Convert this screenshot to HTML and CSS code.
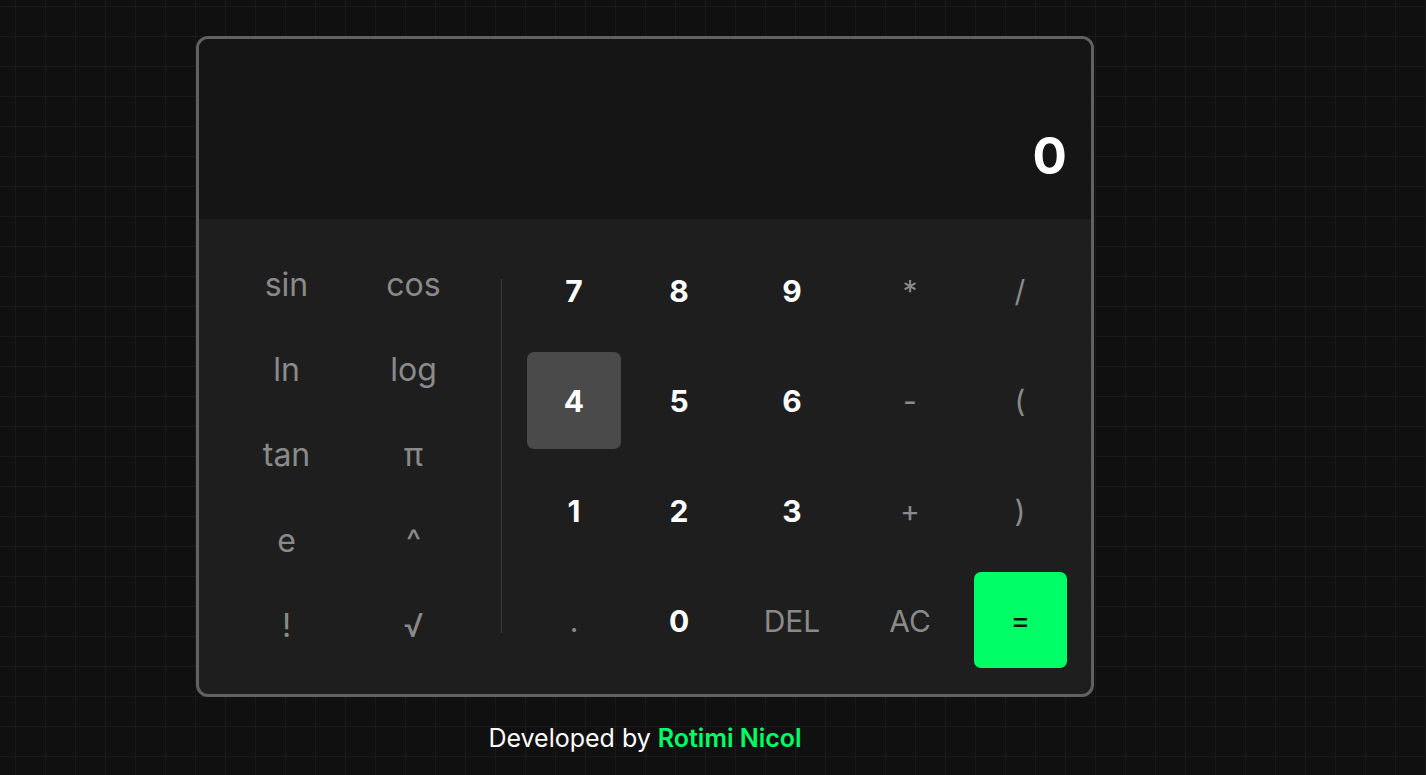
FILE: index.html
```html
<!DOCTYPE html>
<html lang="en">
<head>
<meta charset="utf-8">
<title>Calculator</title>
<link rel="stylesheet" href="styles.css">
</head>
<body>
<div class="wrap">
  <div class="calc">
    <div class="display"><span class="value">0</span></div>
    <div class="keypad">
      <div class="sci">
        <button class="k sc">sin</button>
        <button class="k sc">cos</button>
        <button class="k sc">ln</button>
        <button class="k sc">log</button>
        <button class="k sc">tan</button>
        <button class="k sc">π</button>
        <button class="k sc">e</button>
        <button class="k sc">^</button>
        <button class="k sc">!</button>
        <button class="k sc">√</button>
      </div>
      <div class="divider"></div>
      <div class="main">
        <button class="k num">7</button>
        <button class="k num">8</button>
        <button class="k num">9</button>
        <button class="k op">*</button>
        <button class="k op">/</button>
        <button class="k num active">4</button>
        <button class="k num">5</button>
        <button class="k num">6</button>
        <button class="k op">-</button>
        <button class="k op">(</button>
        <button class="k num">1</button>
        <button class="k num">2</button>
        <button class="k num">3</button>
        <button class="k op">+</button>
        <button class="k op">)</button>
        <button class="k op">.</button>
        <button class="k num">0</button>
        <button class="k op">DEL</button>
        <button class="k op">AC</button>
        <button class="k eq">=</button>
      </div>
    </div>
  </div>
  <p class="footer">Developed by <span class="name">Rotimi Nicol</span></p>
</div>
</body>
</html>
```

FILE: styles.css
```css
* { box-sizing: border-box; }
html, body { height: 100%; }
body {
  margin: 0;
  background-color: #101010;
  background-image:
    linear-gradient(to right, #1a1a1a 1px, transparent 1px),
    linear-gradient(to bottom, #1a1a1a 1px, transparent 1px);
  background-size: 30px 30px;
  background-position: 15px 6px;
  font-family: Inter, "Noto Sans", sans-serif;
  overflow: hidden;
}
.wrap {
  width: 898px;
  margin-left: 196px;
  padding-top: 36px;
}
.calc {
  width: 898px;
  border: 3px solid #616161;
  border-radius: 12px;
  overflow: hidden;
  background: #1e1e1e;
}
.display {
  height: 180px;
  background: #151515;
  display: flex;
  justify-content: flex-end;
  align-items: flex-end;
  padding: 0 24px 38px;
}
.value {
  color: #fff;
  font-weight: 700;
  font-size: 51px;
  line-height: 1;
}
.keypad {
  display: flex;
  padding: 23px 24px 25px;
}
.sci {
  width: 254px;
  display: grid;
  grid-template-columns: 127px 127px;
  grid-template-rows: repeat(5, 1fr);
  height: 427px;
}
.divider {
  width: 1px;
  background: #3a3a3a;
  margin: 37px 25px 36px 24px;
}
.main {
  display: grid;
  grid-template-columns: 94px 116px 110px 126px 94px;
  grid-template-rows: repeat(4, 97px);
  row-gap: 13px;
  width: 540px;
}
.k {
  border: 0;
  background: transparent;
  font-family: inherit;
  padding: 0;
  margin: 0;
  display: flex;
  align-items: center;
  justify-content: center;
  border-radius: 7px;
  line-height: 1;
}
.sc {
  color: #8a8a8a;
  font-size: 32px;
  font-weight: 400;
}
.num {
  color: #fff;
  font-size: 30px;
  font-weight: 700;
}
.op {
  color: #8a8a8a;
  font-size: 30px;
  font-weight: 400;
}
.active {
  background: #4a4a4a;
  width: 94px;
  justify-self: center;
}
.eq {
  background: #00ff66;
  color: #111;
  font-size: 30px;
  font-weight: 400;
  width: 93px;
  justify-self: end;
  height: 96px;
}
.footer {
  margin: 26px 0 0;
  text-align: center;
  color: #fff;
  font-size: 25px;
  line-height: 30px;
  font-weight: 400;
}
.name {
  color: #00ff66;
  font-weight: 600;
}
```
